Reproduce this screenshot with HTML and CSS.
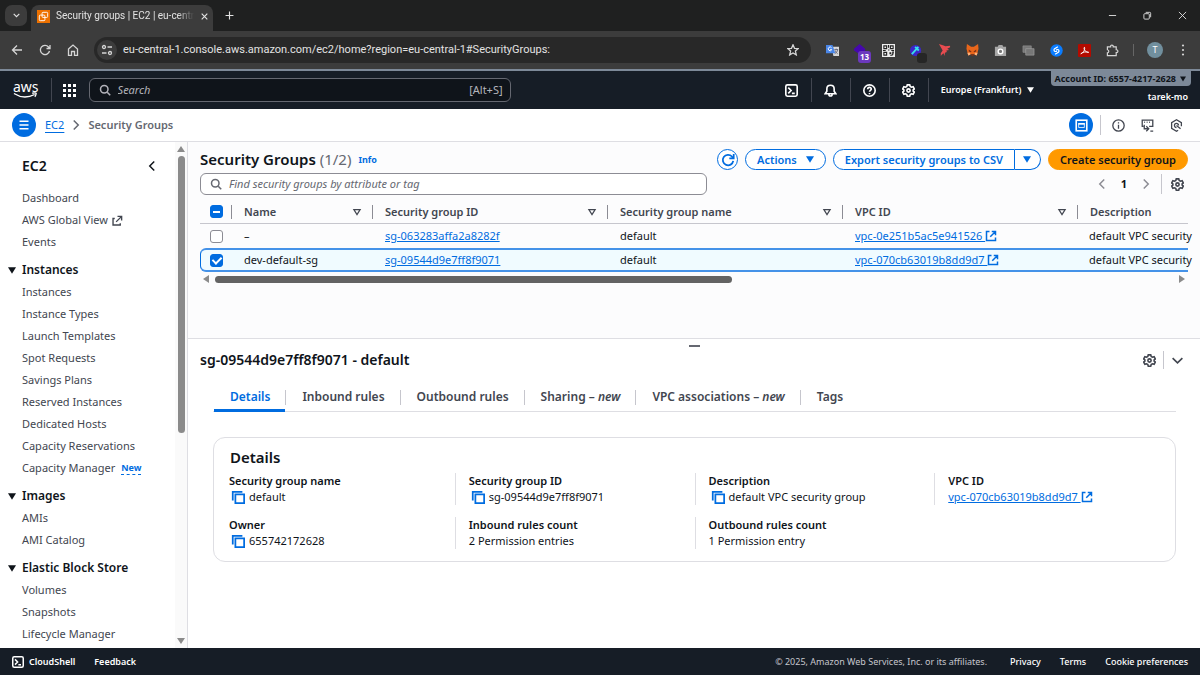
FILE: index.html
```html
<!DOCTYPE html>
<html lang="en">
<head>
  <meta charset="UTF-8">
  <meta name="viewport" content="width=device-width, initial-scale=1.0">
  <title>Security groups | EC2 | eu-central-1</title>
  <link rel="stylesheet" href="styles.css">
</head>
<body>
  <!-- Shared icons -->
  <svg class="sprite" aria-hidden="true">
    <symbol id="i-search" viewBox="0 0 16 16"><circle cx="7" cy="7" r="5"/><path d="M11 11l4 4"/></symbol>
    <symbol id="i-gear" viewBox="0 0 16 16"><path d="M6.500 1h3l.6 2 1.500.9 2.100-.5 1.500 2.600-1.500 1.200v1.600l1.500 1.200-1.500 2.600-2.100-.5-1.500.9-.6 2h-3l-.6-2-1.500-.9-2.100.5L.8 10l1.500-1.200V7.200L.8 6l1.500-2.600 2.100.5L5.900 3z"/><circle cx="8" cy="8" r="2"/></symbol>
    <symbol id="i-shell" viewBox="0 0 16 16"><rect x="1" y="1" width="14" height="14" rx="2"/><path d="M4 4.500L7.500 8 4 11.500M8.500 11.500H12"/></symbol>
    <symbol id="i-external" viewBox="0 0 16 16"><path d="M6 2H2v12h12v-4M9 2h5v5M14 2L7 9"/></symbol>
    <symbol id="i-external-thin" viewBox="0 0 16 16"><path d="M4 5H1.500v9.500H12V12M8 2h6v6M14 2L6 10"/></symbol>
    <symbol id="i-copy" viewBox="0 0 16 16"><path d="M2 12V2h11"/><rect x="5" y="5" width="10" height="10"/></symbol>
    <symbol id="i-down" viewBox="0 0 10 8"><path d="M0 0h10L5 8z"/></symbol>
    <symbol id="i-sort" viewBox="0 0 16 16"><path d="M3 4h10l-5 8z"/></symbol>
    <symbol id="i-left" viewBox="0 0 16 16"><path d="M11 2L5 8l6 6"/></symbol>
    <symbol id="i-right" viewBox="0 0 16 16"><path d="M5 2l6 6-6 6"/></symbol>
  </svg>

  <!-- Browser tabs -->
  <div class="tab-strip">
    <button class="tab-search" aria-label="Search tabs"><svg class="icon" viewBox="0 0 16 16"><path d="M3 5l5 5 5-5"/></svg></button>
    <div class="browser-tab">
      <svg class="favicon" viewBox="0 0 14 14"><path class="fav-bg" d="M0 0h14v14H0z"/><rect x="5.500" y="2.500" width="6" height="5.500" rx="1"/><rect x="2.500" y="5.500" width="6" height="6" rx="1"/></svg>
      <span class="tab-title">Security groups | EC2 | eu-centr</span>
      <button class="tab-close" aria-label="Close tab"><svg class="icon" viewBox="0 0 16 16"><path d="M3 3l10 10M13 3L3 13"/></svg></button>
    </div>
    <button class="new-tab" aria-label="New tab"><svg class="icon" viewBox="0 0 16 16"><path d="M8 1v14M1 8h14"/></svg></button>
    <div class="window-controls">
      <button aria-label="Minimize"><svg class="icon" viewBox="0 0 10 10"><path d="M1 5h8"/></svg></button>
      <button aria-label="Restore"><svg class="icon" viewBox="0 0 10 10"><rect x="1" y="3" width="6" height="6" rx="1"/><path d="M3 1.500h4.500a1 1 0 0 1 1 1V7"/></svg></button>
      <button aria-label="Close"><svg class="icon" viewBox="0 0 10 10"><path d="M1 1l8 8M9 1L1 9"/></svg></button>
    </div>
  </div>

  <!-- Browser toolbar -->
  <div class="toolbar">
    <button class="tool" aria-label="Back"><svg class="icon" viewBox="0 0 12 12"><path d="M11 6H1.500M6 1.500L1.500 6 6 10.500"/></svg></button>
    <button class="tool" aria-label="Reload"><svg class="icon" viewBox="0 0 12 12"><path d="M10.500 7A4.600 4.600 0 1 1 9.500 3L10.800 4.300M11 1v3.500H7.500"/></svg></button>
    <button class="tool" aria-label="Home"><svg class="icon" viewBox="0 0 12 12"><path d="M1.500 5L6 1l4.500 4v6.300H7.500V7.500h-3v3.800h-3z"/></svg></button>
    <div class="url-bar">
      <button class="site-info" aria-label="Site information"><svg class="icon" viewBox="0 0 12 12"><circle cx="3" cy="3" r="1.500"/><path d="M6.500 3H11M1 9h4.500"/><circle cx="9" cy="9" r="1.500"/></svg></button>
      <input class="url" aria-label="Address" value="eu-central-1.console.aws.amazon.com/ec2/home?region=eu-central-1#SecurityGroups:">
      <button class="star" aria-label="Bookmark"><svg class="icon" viewBox="0 0 12 12"><path d="M6 .8l1.500 3.500 3.800.3-2.900 2.500.9 3.800L6 8.900l-3.300 2 .9-3.800L.7 4.600l3.800-.3z"/></svg></button>
    </div>
    <div class="extensions">
      <button aria-label="Translate"><svg viewBox="0 0 14 14"><path fill="#d8d8d8" d="M6 3h8v10H8z"/><path fill="#4a86e8" d="M0 1h7l3 9H0z"/><path fill="none" stroke="#fff" d="M6 4a2 2 0 1 0 0 2.500V6H4.500"/><path fill="none" stroke="#667" d="M9 6h4M11 5v1M12.500 6c0 2-2 4-3 4.500M10 7c0 1.500 1.500 3 2.500 3.500"/></svg></button>
      <button aria-label="Wappalyzer"><svg viewBox="0 0 14 14"><path fill="#4608ad" d="M6 0l6 5v4L6 11 0 7V5z"/></svg><span class="ext-badge">13</span></button>
      <button aria-label="QR code"><svg viewBox="0 0 14 14"><path fill="#eee" d="M0 0h14v14H0z"/><path fill="none" stroke="#222" stroke-width="1.200" d="M2 2h3v3H2zM9 2h3v3H9zM2 9h3v3H2zM7 1v3M6.500 6.500H8M10 7h3M1 7h3"/><path fill="#222" d="M8 9h2v2H8zM11 8h2l-1 4-3 1v-1l2-1z"/></svg></button>
      <button aria-label="Color picker"><svg viewBox="0 0 14 14"><circle cx="6" cy="7" r="6" fill="#3c25c8"/><path stroke="#35e0e8" stroke-width="2" d="M2 11l7-8M5.500 3l4 4"/></svg><span class="ext-square"></span></button>
      <button aria-label="Bird"><svg viewBox="0 0 14 14"><path fill="#e84c50" d="M1 0l5 1.500 2 1 5-.5v1.500l-3 1.500 2 1.500-3 .5.500 1.500-2 1L7 13l-1-3-2 1.500-1 1.500V10l2-3-1-2z"/></svg></button>
      <button aria-label="MetaMask"><svg viewBox="0 0 14 14"><path fill="#e8661b" d="M1 0l4.500 3h3L13 0l.5 5-1 4-1 3.500-3-1.500h-3l-3 1.500L1.500 9l-1-4z"/><path fill="#7b3018" d="M3 6l3 2-1 1-2-1zM11 6L8 8l1 1 2-1zM5.500 11h3l-.5 2H6z"/><path fill="#ffb078" d="M1.500 9.500l3 0v2l-2 1zM12.500 9.500l-3 0v2l2 1z"/></svg></button>
      <button aria-label="Camera"><svg viewBox="0 0 14 14"><path fill="#a7a7a7" d="M1 3h3l1-2h4l1 2h3v10H1z"/><circle cx="7" cy="8" r="2.500" fill="#777" stroke="#fff" stroke-width="1.500"/></svg></button>
      <button aria-label="Windows"><svg viewBox="0 0 14 14"><path fill="#777" stroke="#999" stroke-width=".6" d="M1 2h9v7H1z"/><path fill="#777" stroke="#aaa" stroke-width=".6" d="M4 5h9v7H4z"/></svg></button>
      <button aria-label="Shazam"><svg viewBox="0 0 14 14"><circle cx="7" cy="7" r="6.700" fill="#0a7cff"/><path fill="none" stroke="#fff" stroke-width="1.300" d="M8.500 3L5 5a1.700 1.700 0 0 0 0 2.700c.8.600 1.700.4 2.500-.2M5.500 11L9 9a1.700 1.700 0 0 0 0-2.700c-.8-.6-1.700-.4-2.500.2"/></svg></button>
      <button aria-label="Acrobat"><svg viewBox="0 0 14 14"><rect width="14" height="14" rx="1" fill="#b30b00"/><path fill="none" stroke="#fff" d="M3 10.500c2-.5 5-4 4-7-1.500 1 .5 5.500 4.500 5.500C9 8 5 8.500 3 10.500z"/></svg></button>
      <button aria-label="Extensions"><svg viewBox="0 0 14 14"><path fill="none" stroke="#d5d5d5" stroke-width="1.300" d="M1.500 3h3.500c-.3-2.500 3-2.500 2.800 0H11v3.200c2.500 0 2.500 3 0 3V12.500H1.500V9.500c2-.5 2-3 0-3.300z"/></svg></button>
    </div>
    <span class="tool-line"></span>
    <button class="tool" aria-label="Profile"><span class="avatar">T</span></button>
    <button class="tool" aria-label="Menu"><svg class="dots" viewBox="0 0 12 12"><circle cx="6" cy="1.500" r="1.100"/><circle cx="6" cy="6" r="1.100"/><circle cx="6" cy="10.500" r="1.100"/></svg></button>
  </div>

  <!-- AWS navigation -->
  <header class="aws-nav">
    <a class="aws-logo" href="#" aria-label="AWS home">aws<svg viewBox="0 0 26 6"><path d="M1 1.500c7 4.500 15 4.300 21.500 1M20 1.200c2.500-.6 4.500-.5 4 .6 0 1-.5 2-1.300 3"/></svg></a>
    <button class="apps" aria-label="Services"><svg viewBox="0 0 13 13"><path d="M0 0h3v3H0zM5 0h3v3H5zM10 0h3v3h-3zM0 5h3v3H0zM5 5h3v3H5zM10 5h3v3h-3zM0 10h3v3H0zM5 10h3v3H5zM10 10h3v3h-3z"/></svg></button>
    <label class="nav-search">
      <svg class="icon"><use href="#i-search"/></svg>
      <input type="search" placeholder="Search" aria-label="Search">
      <span>[Alt+S]</span>
    </label>
    <div class="nav-tools">
      <button aria-label="CloudShell"><svg class="icon"><use href="#i-shell"/></svg></button>
      <button aria-label="Notifications"><svg class="icon" viewBox="0 0 16 16"><path d="M8 1.500c-3 0-4.500 2-4.500 4.500v3L1.500 12h13l-2-3V6c0-2.500-1.500-4.500-4.500-4.500zM6 12.500c0 3 4 3 4 0"/></svg></button>
      <button aria-label="Help"><svg class="icon" viewBox="0 0 16 16"><circle cx="8" cy="8" r="7"/><path d="M5.800 6.500c0-3 4.400-3 4.400-.3 0 1.600-2.200 1.500-2.200 3.300M8 11v1.500"/></svg></button>
      <button aria-label="Settings"><svg class="icon"><use href="#i-gear"/></svg></button>
    </div>
    <button class="region">Europe (Frankfurt) <svg class="caret"><use href="#i-down"/></svg></button>
    <div class="account">
      <button class="account-id">Account ID: 6557-4217-2628 <svg class="caret"><use href="#i-down"/></svg></button>
      <span class="account-user">tarek-mo</span>
    </div>
  </header>

  <!-- Breadcrumbs -->
  <div class="crumb-bar">
    <button class="round" aria-label="Open navigation"><svg class="icon" viewBox="0 0 16 16"><path d="M2 3h12M2 8h12M2 13h12"/></svg></button>
    <nav class="crumbs">
      <a href="#">EC2</a>
      <svg class="icon"><use href="#i-right"/></svg>
      <span>Security Groups</span>
    </nav>
    <div class="crumb-tools">
      <button class="round" aria-label="Split panel"><svg class="icon" viewBox="0 0 16 16"><rect x="1.500" y="1.500" width="13" height="13"/><path class="solid" d="M4 5h8v2H4z"/><path class="thin" d="M4.500 5.500h7v5h-7z"/></svg></button>
      <span class="crumb-line"></span>
      <button class="plain" aria-label="Info"><svg class="icon" viewBox="0 0 16 16"><circle cx="8" cy="8" r="7"/><path d="M8 7v5M8 4v1.500"/></svg></button>
      <button class="plain" aria-label="Console recorder"><svg class="icon" viewBox="0 0 16 16"><path d="M3 9H1.500V1.500h13V9H10M4 4h1M7 4h1M10 4h1M4 7v5h5M6.500 9L9.500 12l-3 3M11.500 15H15"/></svg></button>
      <button class="plain" aria-label="Recent"><svg class="icon" viewBox="0 0 16 16"><path d="M10 13.800L8 15l-6-3.500v-7L8 1l6 3.500V9M10.500 8A2.500 2.500 0 1 0 8 10.500M8 8l5 4"/></svg></button>
    </div>
  </div>

  <div class="app">
    <!-- Sidebar -->
    <aside class="sidebar">
      <nav class="side-nav">
        <div class="side-head"><h2>EC2</h2><button aria-label="Close navigation"><svg class="icon"><use href="#i-left"/></svg></button></div>
        <a href="#">Dashboard</a>
        <a href="#">AWS Global View <svg class="icon"><use href="#i-external-thin"/></svg></a>
        <a href="#">Events</a>
        <h3><svg class="caret"><use href="#i-down"/></svg>Instances</h3>
        <a href="#">Instances</a>
        <a href="#">Instance Types</a>
        <a href="#">Launch Templates</a>
        <a href="#">Spot Requests</a>
        <a href="#">Savings Plans</a>
        <a href="#">Reserved Instances</a>
        <a href="#">Dedicated Hosts</a>
        <a href="#">Capacity Reservations</a>
        <a href="#">Capacity Manager <span class="new">New</span></a>
        <h3><svg class="caret"><use href="#i-down"/></svg>Images</h3>
        <a href="#">AMIs</a>
        <a href="#">AMI Catalog</a>
        <h3><svg class="caret"><use href="#i-down"/></svg>Elastic Block Store</h3>
        <a href="#">Volumes</a>
        <a href="#">Snapshots</a>
        <a href="#">Lifecycle Manager</a>
      </nav>
      <div class="v-scroll">
        <svg viewBox="0 0 8 6"><path d="M0 6h8L4 0z"/></svg>
        <div class="v-track"><div class="v-thumb"></div></div>
        <svg viewBox="0 0 8 6"><path d="M0 0h8L4 6z"/></svg>
      </div>
    </aside>

    <main class="content">
      <section class="groups">
        <div class="groups-head">
          <h1>Security Groups <span class="count">(1/2)</span></h1>
          <a class="info" href="#">Info</a>
          <div class="actions">
            <button class="refresh" aria-label="Refresh"><svg class="icon" viewBox="0 0 16 16"><path d="M14 9A6 6 0 1 1 12.500 4L14 5.500M14.500 1v5h-5"/></svg></button>
            <button class="btn">Actions <svg class="caret"><use href="#i-down"/></svg></button>
            <div class="btn-group">
              <button class="btn">Export security groups to CSV</button>
              <button class="btn" aria-label="More export options"><svg class="caret"><use href="#i-down"/></svg></button>
            </div>
            <button class="btn primary">Create security group</button>
          </div>
        </div>
        <div class="filter-row">
          <label class="filter">
            <svg class="icon"><use href="#i-search"/></svg>
            <input type="search" placeholder="Find security groups by attribute or tag" aria-label="Find security groups">
          </label>
          <div class="pager">
            <button class="dim" aria-label="Previous page"><svg class="icon"><use href="#i-left"/></svg></button>
            <button class="page">1</button>
            <button class="dim" aria-label="Next page"><svg class="icon"><use href="#i-right"/></svg></button>
            <button class="prefs" aria-label="Preferences"><svg class="icon"><use href="#i-gear"/></svg></button>
          </div>
        </div>
        <table>
          <thead>
            <tr>
              <th class="col-check"><input type="checkbox" class="mixed" aria-label="Select all"></th>
              <th class="col-name"><div>Name <svg class="icon"><use href="#i-sort"/></svg></div></th>
              <th class="col-wide"><div>Security group ID <svg class="icon"><use href="#i-sort"/></svg></div></th>
              <th class="col-wide"><div>Security group name <svg class="icon"><use href="#i-sort"/></svg></div></th>
              <th class="col-wide"><div>VPC ID <svg class="icon"><use href="#i-sort"/></svg></div></th>
              <th><div>Description</div></th>
            </tr>
          </thead>
          <tbody>
            <tr>
              <td><input type="checkbox" aria-label="Select sg-063283affa2a8282f"></td>
              <td>–</td>
              <td><a href="#">sg-063283affa2a8282f</a></td>
              <td>default</td>
              <td><a href="#">vpc-0e251b5ac5e941526 <svg class="icon"><use href="#i-external"/></svg></a></td>
              <td>default VPC security</td>
            </tr>
            <tr class="selected">
              <td><input type="checkbox" checked aria-label="Select dev-default-sg"></td>
              <td>dev-default-sg</td>
              <td><a href="#">sg-09544d9e7ff8f9071</a></td>
              <td>default</td>
              <td><a href="#">vpc-070cb63019b8dd9d7 <svg class="icon"><use href="#i-external"/></svg></a></td>
              <td>default VPC security</td>
            </tr>
          </tbody>
        </table>
        <div class="h-scroll">
          <svg viewBox="0 0 6 8"><path d="M6 0v8L0 4z"/></svg>
          <div class="h-track"><div class="h-thumb"></div></div>
          <svg viewBox="0 0 6 8"><path d="M0 0v8l6-4z"/></svg>
        </div>
      </section>

      <!-- Split panel -->
      <section class="panel">
        <div class="grip"></div>
        <div class="panel-head">
          <h2>sg-09544d9e7ff8f9071 - default</h2>
          <button aria-label="Panel preferences"><svg class="icon"><use href="#i-gear"/></svg></button>
          <button class="collapse" aria-label="Collapse panel"><svg class="icon" viewBox="0 0 16 16"><path d="M2 5l6 6 6-6"/></svg></button>
        </div>
        <div class="tabs" role="tablist">
          <button role="tab" aria-selected="true">Details</button>
          <button role="tab">Inbound rules</button>
          <button role="tab">Outbound rules</button>
          <button role="tab">Sharing – <em>new</em></button>
          <button role="tab">VPC associations – <em>new</em></button>
          <button role="tab">Tags</button>
        </div>
        <div class="card">
          <h2>Details</h2>
          <dl class="details">
            <div><dt>Security group name</dt><dd><svg class="copy"><use href="#i-copy"/></svg>default</dd></div>
            <div><dt>Security group ID</dt><dd><svg class="copy"><use href="#i-copy"/></svg>sg-09544d9e7ff8f9071</dd></div>
            <div><dt>Description</dt><dd><svg class="copy"><use href="#i-copy"/></svg>default VPC security group</dd></div>
            <div><dt>VPC ID</dt><dd><a href="#">vpc-070cb63019b8dd9d7 <svg class="icon"><use href="#i-external"/></svg></a></dd></div>
            <div><dt>Owner</dt><dd><svg class="copy"><use href="#i-copy"/></svg>655742172628</dd></div>
            <div><dt>Inbound rules count</dt><dd>2 Permission entries</dd></div>
            <div><dt>Outbound rules count</dt><dd>1 Permission entry</dd></div>
          </dl>
        </div>
      </section>
    </main>
  </div>

  <footer class="footer">
    <button><svg class="icon"><use href="#i-shell"/></svg>CloudShell</button>
    <button>Feedback</button>
    <span class="copyright">© 2025, Amazon Web Services, Inc. or its affiliates.</span>
    <a href="#">Privacy</a>
    <a href="#">Terms</a>
    <a href="#">Cookie preferences</a>
  </footer>
</body>
</html>
```
FILE: styles.css
```css
* {
  box-sizing: border-box;
}

body {
  margin: 0;
  height: 100vh;
  display: flex;
  flex-direction: column;
  overflow: hidden;
  font-family: "Noto Sans", "Open Sans", sans-serif;
  font-size: 11px;
  line-height: 16px;
  color: #0f141a;
  background: #fff;
}

h1, h2, h3, dl, dd {
  margin: 0;
}

h1, h2, h3, th, dt {
  font-weight: 600;
}

button {
  font: inherit;
  color: inherit;
  background: none;
  border: 0;
  padding: 0;
  display: flex;
  align-items: center;
  justify-content: center;
}

input {
  font: inherit;
  color: inherit;
  background: none;
  border: 0;
  padding: 0;
  outline: 0;
  min-width: 0;
}

a {
  color: #006ce0;
}

.sprite {
  position: absolute;
  width: 0;
  height: 0;
}

.icon,
.copy {
  width: 12px;
  height: 12px;
  flex: none;
  fill: none;
  stroke: currentColor;
  stroke-width: 2;
}

.caret {
  width: 8px;
  height: 7px;
  flex: none;
  fill: currentColor;
}

/* Browser tabs */
.tab-strip {
  flex: none;
  height: 31px;
  display: flex;
  align-items: center;
  padding-left: 5px;
  background: #1f2020;
  color: #e3e3e3;
}

.tab-search {
  width: 22px;
  height: 21px;
  border-radius: 7px;
  background: #3c3c3c;
}

.tab-search .icon,
.tab-close .icon,
.new-tab .icon {
  width: 9px;
  height: 9px;
}

.browser-tab {
  align-self: flex-end;
  width: 182px;
  height: 26px;
  margin-left: 4px;
  padding: 0 8px 4px 6px;
  display: flex;
  align-items: center;
  gap: 6px;
  border-radius: 8px 8px 0 0;
  background: #3c3c3c;
}

.favicon {
  width: 13px;
  height: 13px;
  flex: none;
  fill: none;
  stroke: #fff;
}

.favicon .fav-bg {
  fill: #ed7100;
  stroke: none;
}

.tab-title {
  flex: 1;
  white-space: nowrap;
  font-family: Roboto, sans-serif;
  font-size: 10px;
  mask-image: linear-gradient(to right, #000 88%, transparent);
}

.tab-close {
  width: 8px;
  margin-right: 2px;
}

.new-tab {
  width: 32px;
}

.window-controls {
  margin-left: auto;
  display: flex;
}

.window-controls button {
  width: 35px;
  height: 31px;
}

.window-controls .icon {
  width: 9px;
  height: 9px;
  stroke-width: 1;
}

/* Browser toolbar */
.toolbar {
  flex: none;
  height: 40px;
  display: flex;
  align-items: center;
  padding: 0 3px;
  background: #3c3c3c;
  border-bottom: 2px solid #7d8998;
  color: #d5d5d5;
}

.tool {
  width: 28px;
  height: 26px;
}

.toolbar .icon {
  width: 12px;
  height: 12px;
  stroke-width: 1.3;
}

.url-bar {
  flex: 1;
  height: 26px;
  margin: 0 7px;
  padding: 0 12px 0 3px;
  display: flex;
  align-items: center;
  gap: 6px;
  border-radius: 13px;
  background: #282828;
}

.site-info {
  width: 20px;
  height: 20px;
  border-radius: 10px;
  background: #3c3c3c;
}

.url {
  flex: 1;
  color: #e3e3e3;
  font-family: Roboto, sans-serif;
}

.extensions {
  display: flex;
}

.extensions button {
  position: relative;
  width: 28px;
  height: 26px;
}

.extensions svg {
  width: 13px;
  height: 13px;
}

.ext-badge,
.ext-square {
  position: absolute;
  right: 3px;
  bottom: 0;
  width: 13px;
  height: 12px;
  border-radius: 3px;
  background: #6b39bd;
  color: #fff;
  font-size: 8px;
  font-weight: 700;
  line-height: 12px;
}

.ext-square {
  width: 10px;
  height: 10px;
  background: #262626;
}

.tool-line {
  width: 1px;
  height: 12px;
  margin: 0 7px;
  background: #666;
}

.avatar {
  width: 16px;
  height: 16px;
  border-radius: 8px;
  background: #718f9e;
  color: #fff;
  font-size: 9px;
}

.dots {
  width: 12px;
  height: 12px;
  fill: currentColor;
}

/* AWS navigation */
.aws-nav {
  flex: none;
  height: 38px;
  display: flex;
  align-items: center;
  padding-left: 13px;
  background: #161d26;
  color: #fff;
}

.aws-logo {
  display: flex;
  flex-direction: column;
  color: #fff;
  font-size: 14px;
  line-height: 10px;
  text-decoration: none;
}

.aws-logo svg {
  width: 25px;
  height: 6px;
  fill: none;
  stroke: currentColor;
  stroke-width: 1.400;
}

.apps {
  width: 38px;
  height: 24px;
  margin-left: 12px;
  padding-right: 2px;
  border-left: 1px solid #424650;
}

.apps svg {
  width: 13px;
  height: 13px;
  fill: currentColor;
}

.nav-search {
  width: 422px;
  height: 24px;
  padding: 0 7px 0 9px;
  display: flex;
  align-items: center;
  gap: 7px;
  border: 1px solid #656871;
  border-radius: 6px;
  background: #0f141a;
  color: #b4b4bb;
}

.nav-search input {
  flex: 1;
}

.nav-search input::placeholder,
.filter input::placeholder {
  color: inherit;
  font-style: italic;
}

.nav-tools {
  margin-left: auto;
  display: flex;
}

.nav-tools button {
  width: 39px;
  height: 24px;
  border-right: 1px solid #424650;
}

.nav-tools .icon {
  width: 13px;
  height: 13px;
}

.region {
  gap: 6px;
  padding-left: 12px;
  font-size: 9px;
  font-weight: 600;
}

.region .caret {
  width: 7px;
  height: 6px;
}

.account {
  align-self: stretch;
  margin: 0 9px 0 17px;
  display: flex;
  flex-direction: column;
  align-items: flex-end;
  gap: 3px;
}

.account-id {
  height: 15px;
  gap: 4px;
  padding: 0 5px 0 3px;
  border-radius: 0 0 4px 4px;
  background: #7d8998;
  color: #0f141a;
  font-size: 9px;
  font-weight: 700;
}

.account-id .caret {
  width: 6px;
  height: 6px;
}

.account-user {
  padding-right: 3px;
  font-size: 9px;
  font-weight: 600;
}

/* Breadcrumbs */
.crumb-bar {
  flex: none;
  height: 33px;
  display: flex;
  align-items: center;
  padding: 0 12px;
  border-bottom: 1px solid #dedee3;
}

.round {
  width: 24px;
  height: 24px;
  border-radius: 12px;
  background: #006ce0;
  color: #fff;
}

.round .solid {
  fill: currentColor;
  stroke: none;
}

.round .thin {
  stroke-width: 1;
}

.crumbs {
  display: flex;
  align-items: center;
  gap: 6px;
  margin-left: 9px;
  color: #656871;
  font-weight: 600;
}

.crumbs a {
  font-weight: 400;
  text-underline-offset: 3px;
}

.crumb-tools {
  margin-left: auto;
  display: flex;
  align-items: center;
  color: #424650;
}

.crumb-tools .icon {
  width: 13px;
  height: 13px;
}

.plain .icon {
  stroke-width: 1.600;
}

.crumb-line {
  width: 1px;
  height: 20px;
  margin: 0 0 0 7px;
  background: #c6c6cd;
}

.plain {
  width: 24px;
  margin-left: 5px;
}

/* Page */
.app {
  flex: 1;
  min-height: 0;
  display: flex;
}

.sidebar {
  flex: none;
  width: 188px;
  display: flex;
  border-right: 1px solid #dedee3;
}

.side-nav {
  flex: 1;
  overflow: hidden;
  padding: 12px 0 0 22px;
}

.side-nav > a {
  display: flex;
  align-items: center;
  height: 22px;
  color: #424650;
  text-decoration: none;
  white-space: nowrap;
}

.side-nav > a .icon {
  width: 11px;
  height: 11px;
  margin-left: 4px;
}

.side-head {
  display: flex;
  align-items: center;
  justify-content: space-between;
  height: 24px;
  margin: 0 17px 9px 0;
}

.side-head h2 {
  font-size: 14px;
}

.side-nav h3 {
  display: flex;
  align-items: center;
  gap: 6px;
  height: 22px;
  margin: 6px 0 0 -14px;
  font-size: 12px;
}

.new {
  margin-left: 6px;
  line-height: 12px;
  border-bottom: 1px dashed #006ce0;
  color: #006ce0;
  font-size: 9px;
  font-weight: 700;
}

.v-scroll {
  width: 12px;
  display: flex;
  flex-direction: column;
  align-items: center;
  gap: 4px;
  padding: 4px 0;
  background: #fafafa;
}

.v-scroll svg {
  width: 8px;
  height: 6px;
  fill: #8b8b8b;
}

.v-track {
  flex: 1;
}

.v-thumb {
  width: 7px;
  height: 58%;
  border-radius: 4px;
  background: #8b8b8b;
}

.content {
  flex: 1;
  min-width: 0;
  display: flex;
  flex-direction: column;
}

.groups {
  flex: none;
  height: 197px;
  padding: 7px 12px 0;
  background: #fcfcfd;
  border-bottom: 1px solid #dedee3;
}

.groups-head {
  display: flex;
  align-items: center;
  height: 21px;
}

.groups-head h1 {
  padding-bottom: 2px;
  font-size: 15px;
}

.count {
  color: #656871;
  font-weight: 400;
}

.info {
  margin-left: 7px;
  font-size: 9px;
  font-weight: 700;
  text-decoration: none;
}

.actions {
  margin-left: auto;
  display: flex;
  gap: 7px;
}

.btn,
.refresh {
  height: 21px;
  border: 1px solid #006ce0;
  border-radius: 11px;
  background: #fff;
  color: #006ce0;
  font-weight: 600;
  white-space: nowrap;
}

.btn {
  gap: 9px;
  padding: 0 11px;
}

.refresh {
  width: 21px;
}

.refresh .icon {
  width: 14px;
  height: 14px;
}

.btn-group {
  display: flex;
}

.btn-group .btn:first-child {
  border-radius: 11px 0 0 11px;
}

.btn-group .btn:last-child {
  padding: 0 9px 0 8px;
  border-left: 0;
  border-radius: 0 11px 11px 0;
}

.btn.primary {
  border-color: #ff9900;
  background: #ff9900;
  color: #0f141a;
}

.filter-row {
  display: flex;
  align-items: center;
  justify-content: space-between;
  margin-top: 3px;
}

.filter {
  width: 507px;
  height: 22px;
  padding: 0 9px;
  display: flex;
  align-items: center;
  gap: 7px;
  border: 1px solid #8c8c94;
  border-radius: 6px;
  background: #fff;
  color: #656871;
}

.filter input {
  flex: 1;
}

.pager {
  display: flex;
  align-items: center;
  color: #424650;
}

.pager button {
  width: 22px;
  height: 20px;
}

.pager .page {
  color: #0f141a;
  font-weight: 700;
}

.pager .dim {
  color: #8c8c94;
}

.pager .prefs {
  width: 27px;
  margin-left: 4px;
  padding-left: 5px;
  border-left: 1px solid #c6c6cd;
}

.prefs .icon,
.panel-head .icon {
  width: 13px;
  height: 13px;
}

table {
  width: 100%;
  margin-top: 5px;
  table-layout: fixed;
  border-collapse: separate;
  border-spacing: 0;
}

th,
td {
  height: 24px;
  padding: 0 13px;
  text-align: left;
  white-space: nowrap;
}

th {
  border-bottom: 1px solid #c6c6cd;
  color: #424650;
}

th div {
  display: flex;
  align-items: center;
  justify-content: space-between;
  height: 14px;
  margin: 0 -13px;
  padding: 0 10px 0 12px;
  border-left: 1px solid #8c8c94;
}

th .icon {
  width: 10px;
  height: 10px;
}

.col-check {
  width: 31px;
}

.col-name {
  width: 141px;
}

.col-wide {
  width: 235px;
}

th:first-child,
td:first-child {
  padding: 0 0 0 10px;
}

th:last-child,
td:last-child {
  padding-right: 0;
}

th:last-child div {
  margin-right: 0;
}

td:last-child {
  padding-left: 12px;
}

td .icon,
dd .icon {
  vertical-align: -2px;
}

.selected td {
  border-top: 2px solid #4592e8;
  border-bottom: 2px solid #4592e8;
  background: #f0fbff;
}

.selected td:first-child {
  border-left: 1px solid #006ce0;
  border-radius: 6px 0 0 6px;
  padding-left: 9px;
}

input[type="checkbox"] {
  appearance: none;
  display: block;
  width: 13px;
  height: 13px;
  margin: 0;
  border: 1px solid #8c8c94;
  border-radius: 3px;
  background: #fff;
}

input[type="checkbox"].mixed,
input[type="checkbox"]:checked {
  display: flex;
  align-items: center;
  justify-content: center;
  border-color: #006ce0;
  background: #006ce0;
}

input.mixed::after {
  content: "";
  width: 7px;
  height: 2px;
  background: #fff;
}

input:checked::after {
  content: "";
  width: 4px;
  height: 7px;
  margin-bottom: 2px;
  border: solid #fff;
  border-width: 0 2px 2px 0;
  transform: rotate(45deg);
}

.h-scroll {
  display: flex;
  align-items: center;
  gap: 6px;
  margin-top: 3px;
  padding: 0 3px;
}

.h-scroll svg {
  width: 6px;
  height: 8px;
  fill: #8b8b8b;
}

.h-track {
  flex: 1;
}

.h-thumb {
  width: 54%;
  height: 7px;
  border-radius: 4px;
  background: #636363;
}

/* Split panel */
.panel {
  flex: 1;
  padding: 6px 24px 0 25px;
}

.grip {
  width: 11px;
  height: 2px;
  margin: 0 auto;
  background: #656871;
}

.panel-head {
  display: flex;
  align-items: center;
  height: 20px;
  margin: 3px -12px 0 -13px;
  color: #424650;
}

.panel-head h2 {
  flex: 1;
  color: #0f141a;
  font-size: 14px;
}

.panel-head button {
  width: 20px;
  height: 18px;
}

.panel-head .collapse {
  width: 25px;
  margin-left: 4px;
  padding-left: 2px;
  border-left: 1px solid #c6c6cd;
}

.tabs {
  display: flex;
  align-items: center;
  height: 29px;
  margin-top: 13px;
  padding-left: 1px;
  border-bottom: 1px solid #dedee3;
}

.tabs button {
  height: 15px;
  padding: 0 15px 0 16px;
  border-right: 1px solid #c6c6cd;
  color: #424650;
  font-size: 12px;
  font-weight: 600;
  white-space: pre;
}

.tabs button:last-child {
  border: 0;
}

.tabs [aria-selected="true"] {
  position: relative;
  color: #006ce0;
}

.tabs [aria-selected="true"]::after {
  content: "";
  position: absolute;
  left: 0;
  right: 0;
  bottom: -7px;
  height: 3px;
  background: #006ce0;
}

.card {
  margin-top: 25px;
  padding: 9px 16px 12px;
  border: 1px solid #dedee3;
  border-radius: 12px;
}

.card h2 {
  font-size: 15px;
  line-height: 20px;
}

.details {
  display: grid;
  grid-template-columns: repeat(4, 1fr);
  row-gap: 12px;
  margin: 6px -15px 0 -15px;
}

.details div {
  padding-left: 13px;
  border-left: 1px solid #dedee3;
}

.details div:nth-child(4n + 1) {
  border-color: transparent;
}

dd {
  display: flex;
  align-items: center;
}

.copy {
  width: 14px;
  height: 14px;
  margin: 0 4px 0 2px;
  color: #006ce0;
}

/* Footer */
.footer {
  flex: none;
  height: 27px;
  display: flex;
  align-items: center;
  gap: 19px;
  padding: 0 12px;
  background: #161d26;
  color: #fff;
  font-size: 9px;
  font-weight: 600;
}

.footer button {
  gap: 5px;
}

.footer a {
  color: #fff;
  font-weight: 500;
  text-decoration: none;
}

.copyright {
  margin-left: auto;
  margin-right: 4px;
  color: #c6c6cd;
  font-weight: 400;
}
```
